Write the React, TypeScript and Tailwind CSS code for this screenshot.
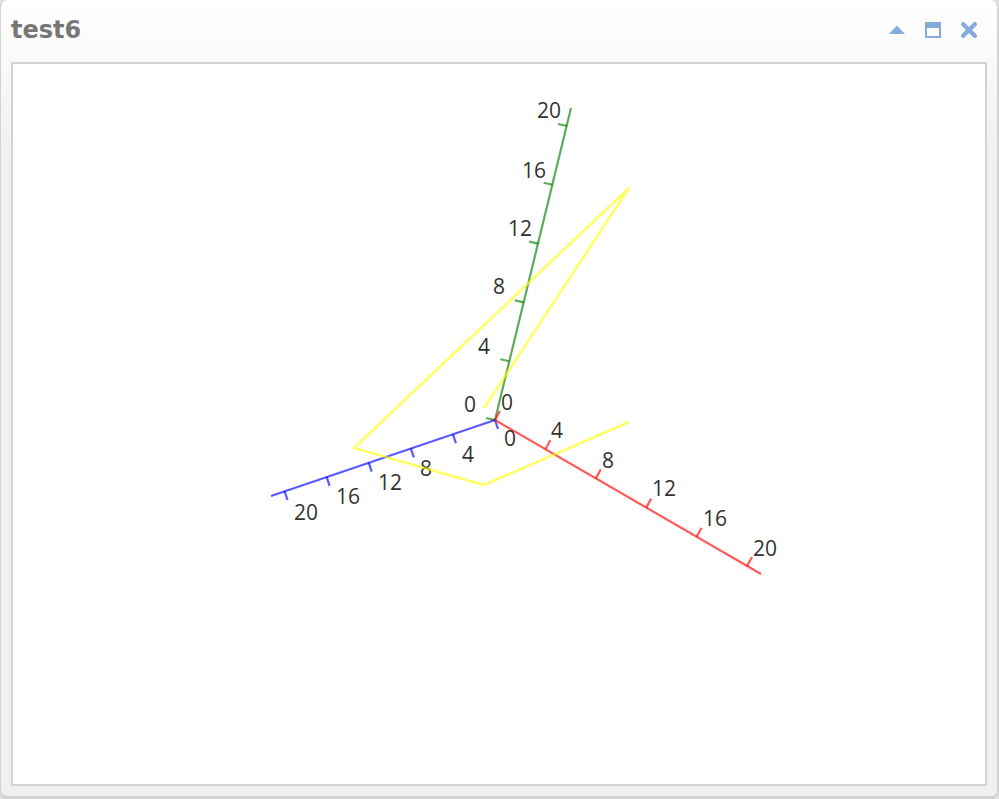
type Axis = {
  name: string
  color: string
  end: [number, number]
  step: [number, number]
  tick: [number, number]
  labels: [string, number, number][]
}

const ORIGIN: [number, number] = [482, 356]

const AXES: Axis[] = [
  {
    name: "y",
    color: "#008000",
    end: [558, 44],
    step: [14.4, -58.8],
    tick: [-9, -2],
    labels: [["0", 457, 348], ["4", 471, 290], ["8", 486, 230], ["12", 507, 172], ["16", 521, 114], ["20", 536, 54]],
  },
  {
    name: "z",
    color: "#0000ff",
    end: [258, 432],
    step: [-42.1, 14.2],
    tick: [3, 9],
    labels: [["0", 497, 382], ["4", 455, 398], ["8", 413, 412], ["12", 377, 426], ["16", 335, 440], ["20", 293, 456]],
  },
  {
    name: "x",
    color: "#ff0000",
    end: [748, 510],
    step: [50.4, 29.2],
    tick: [5, -9],
    labels: [["0", 494, 346], ["4", 544, 374], ["8", 595, 404], ["12", 651, 432], ["16", 702, 462], ["20", 752, 492]],
  },
]

const SERIES = [
  [471, 344],
  [616, 124],
  [341, 384],
  [471, 421],
  [616, 358],
]

function Chart() {
  const [ox, oy] = ORIGIN
  return (
    <svg viewBox="0 0 972 720" className="block h-full w-full" role="img" aria-label="3D line chart">
      {AXES.map(({ name, color, end, step, tick }) => (
        <g key={name} stroke={color} strokeOpacity={0.65} strokeWidth={2.2} fill="none">
          <path d={`M${ox} ${oy}L${end[0]} ${end[1]}`} />
          {[0, 1, 2, 3, 4, 5].map((i) => (
            <path key={i} d={`M${ox + step[0] * i} ${oy + step[1] * i}l${tick[0]} ${tick[1]}`} />
          ))}
        </g>
      ))}
      <g fill="#333333" fontSize={21} textAnchor="middle" className="font-['Open_Sans',sans-serif]">
        {AXES.map(({ name, labels }) =>
          labels.map(([text, x, y]) => (
            <text key={name + text} x={x} y={y}>
              {text}
            </text>
          ))
        )}
      </g>
      <polyline
        points={SERIES.map((p) => p.join(",")).join(" ")}
        fill="none"
        stroke="#ffff00"
        strokeOpacity={0.6}
        strokeWidth={2.6}
      />
    </svg>
  )
}

export default function App() {
  return (
    <div className="h-screen bg-[#e0e0e0]">
      <section className="flex h-full flex-col rounded-lg border-r-2 border-b-3 border-l border-[#d3d3d3] bg-linear-to-b from-white to-[#f0f0f0] to-[160px] px-2.5 pb-2.5">
        <header className="flex h-[62px] shrink-0 items-center justify-between pr-2 pb-0.5">
          <h1 className="font-['DejaVu_Sans',Verdana,sans-serif] text-2xl font-bold text-[#777777]">test6</h1>
          <div className="flex gap-4 text-[#87aadc]">
            <button type="button" aria-label="Collapse" className="cursor-pointer">
              <svg width="20" height="20" viewBox="0 0 20 20" fill="currentColor">
                <path d="M2 14 9 6.6Q10 5.6 11 6.6L18 14Z" />
              </svg>
            </button>
            <button type="button" aria-label="Maximize" className="cursor-pointer">
              <svg width="20" height="20" viewBox="0 0 20 20" fill="currentColor">
                <path fillRule="evenodd" d="M2 2H18V18H2ZM4 8V16H16V8Z" />
              </svg>
            </button>
            <button type="button" aria-label="Close" className="cursor-pointer">
              <svg width="20" height="20" viewBox="0 0 20 20" fill="none" stroke="currentColor" strokeWidth="4.4" strokeLinecap="round">
                <path d="M4.2 4.2 15.8 15.8M15.8 4.2 4.2 15.8" />
              </svg>
            </button>
          </div>
        </header>
        <main className="min-h-0 flex-1 border-2 border-[#d3d3d3] bg-white">
          <Chart />
        </main>
      </section>
    </div>
  )
}
